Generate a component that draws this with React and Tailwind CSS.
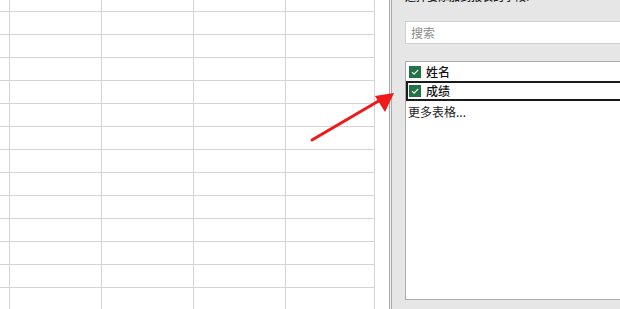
import React from "react";

const cols = [10, 92, 92, 92, 89];
const rows = [12, 23, 23, 23, 23, 23, 23, 23, 23, 23, 23, 23, 23, 23];

function Check() {
  return (
    <span className="flex h-[12px] w-[12px] items-center justify-center bg-[#217346]">
      <svg width="10" height="10" viewBox="0 0 10 10">
        <path d="M2 5.2 L4.1 7.2 L8.2 2.8" fill="none" stroke="#fff" strokeWidth="1.1" />
      </svg>
    </span>
  );
}

export default function App() {
  return (
    <div
      className="relative flex h-[309px] w-[620px] overflow-hidden bg-white"
      style={{ fontFamily: '"Noto Sans CJK SC", "Noto Sans", sans-serif' }}
    >
      {/* sheet */}
      <div className="flex w-[375px] shrink-0 flex-col border-r border-[#c6c6c6]">
        {rows.map((h, r) => (
          <div key={r} className="flex shrink-0" style={{ height: h }}>
            {cols.map((w, c) => (
              <div
                key={c}
                className="shrink-0 border-b border-r border-[#d4d4d4]"
                style={{ width: w }}
              />
            ))}
          </div>
        ))}
      </div>
      <div className="w-[14px] shrink-0 bg-white" />
      <div className="w-[3px] shrink-0 border-x border-[#a9a9a9] bg-[#f0f0f0]" />

      {/* field list panel */}
      <div className="flex flex-1 flex-col bg-[#e6e6e6] pl-[13px]">
        <div className="-mt-[10px] h-[13px] whitespace-nowrap text-[11px] font-medium leading-[13px] text-[#222]">
          选择要添加到报表的字段:
        </div>
        <div className="mt-[18px] flex h-[23px] w-[240px] items-center border border-[#cfcfcf] bg-white pl-[5px] text-[12px] text-[#8a8a8a]">
          搜索
        </div>
        <div className="mt-[17px] flex h-[239px] w-[240px] flex-col border border-[#ababab] bg-white">
          <div className="flex h-[19px] items-center gap-[5px] pl-[3px] text-[12px] font-medium text-[#111]">
            <Check />
            <span>姓名</span>
          </div>
          <div className="flex h-[20px] items-center gap-[5px] border-2 border-[#1a1a1a] pl-[1px] text-[12px] font-medium text-[#111]">
            <Check />
            <span>成绩</span>
          </div>
          <div className="mt-[2px] pl-[2px] text-[12px] leading-[18px] text-[#222]">更多表格...</div>
        </div>
      </div>

      {/* annotation arrow */}
      <svg className="pointer-events-none absolute left-0 top-0" width="620" height="309">
        <line x1="312" y1="140" x2="382" y2="99" stroke="#f01818" strokeWidth="3" strokeLinecap="round" />
        <polygon points="394,93 375,96 385,112" fill="#f01818" />
      </svg>
    </div>
  );
}
